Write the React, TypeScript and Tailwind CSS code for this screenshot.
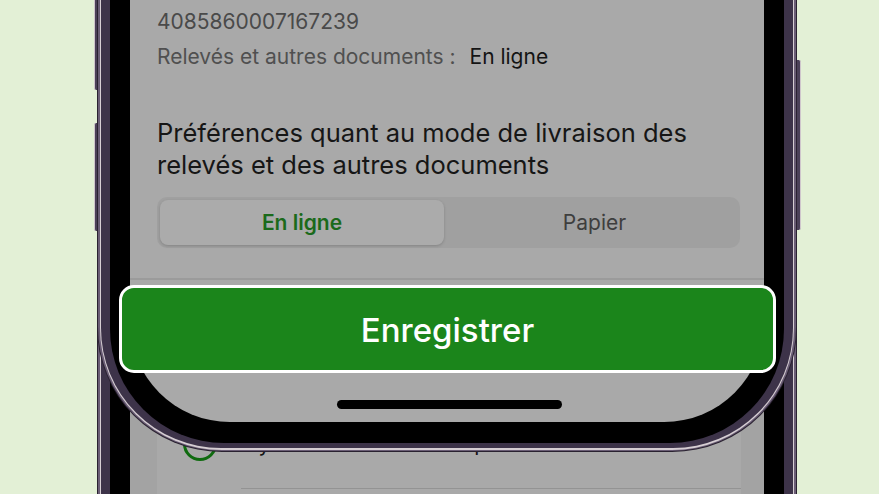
import React from "react";

function SideStrip({ side }: { side: "left" | "right" }) {
  const parts = [
    <div key="a" className="w-[1px] h-full bg-[#2a2231]" />,
    <div key="b" className="w-[2px] h-full bg-[#6a5d75]" />,
    <div key="c" className="w-[1px] h-full bg-[#d6ced3]" />,
    <div key="d" className="w-[9px] h-full bg-[#3d3349]" />,
  ];
  return <div className="flex h-full">{side === "left" ? parts : [...parts].reverse()}</div>;
}

export default function App() {
  return (
    <div
      className="relative w-[879px] h-[494px] overflow-hidden bg-[#e3f0d6]"
      style={{ fontFamily: 'Inter, "Noto Sans", "Liberation Sans", sans-serif' }}
    >
      {/* side buttons */}
      <div className="absolute left-[94px] top-[-20px] w-[4px] h-[110px] rounded-l-[2px] bg-[#4b4058] border-l border-[#cfc6cc]" />
      <div className="absolute left-[94px] top-[123px] w-[4px] h-[108px] rounded-l-[2px] bg-[#4b4058] border-l border-[#cfc6cc]" />
      <div className="absolute left-[797px] top-[60px] w-[4px] h-[170px] rounded-r-[2px] bg-[#4b4058] border-r border-[#cfc6cc]" />

      {/* lower phone layer (continuation) */}
      <div className="ml-[97px] w-[700px] h-[494px] flex">
        <SideStrip side="left" />
        <div className="w-[20px] h-full bg-black" />
        <div className="flex-1 h-full bg-[#a3a3a3] pt-[380px]">
          <div className="ml-[27px] mr-[23px] h-[200px] bg-[#a9a9a9] pt-[47px]">
            <div className="flex items-center h-[34px] pl-[26px]">
              <div className="w-[34px] h-[34px] rounded-full border-[3px] border-[#0f6b0f]" />
              <span className="ml-[28px] text-[21px] leading-[24px] text-[#161616]">
                Synchroniser mon compte
              </span>
            </div>
            <div className="mt-[27px] ml-[84px] h-[1px] bg-[#939393]" />
          </div>
        </div>
        <div className="w-[20px] h-full bg-black" />
        <SideStrip side="right" />
      </div>

      {/* upper phone layer with rounded bottom */}
      <div className="absolute left-[97px] top-0 w-[700px] h-[452px] rounded-b-[125px] bg-[#2a2231] px-[1px] pb-[1px]">
        <div className="h-full rounded-b-[124px] bg-[#6a5d75] px-[2px] pb-[1px]">
          <div className="h-full rounded-b-[122px] bg-[#d6ced3] px-[1px] pb-[2px]">
            <div className="h-full rounded-b-[120px] bg-[#3d3349] px-[9px] pb-[5px]">
              <div className="h-full rounded-b-[114px] bg-black px-[20px] pb-[21px]">
                <div className="relative h-full rounded-b-[100px] bg-[#a9a9a9] overflow-hidden flex flex-col">
                  <div className="pl-[27px] pr-[24px] pt-[9px]">
                    <div className="text-[21px] leading-[26px] text-[#4a4a4a]">4085860007167239</div>
                    <div className="mt-[9px] text-[21px] leading-[26px] text-[#505050] flex">
                      <span>Relevés et autres documents :</span>
                      <span className="ml-[14px] text-[#141414]">En ligne</span>
                    </div>
                    <div className="mt-[47px] text-[25.5px] leading-[32px] text-[#161616]">
                      Préférences quant au mode de livraison des
                      <br />
                      relevés et des autres documents
                    </div>
                    <div className="mt-[16px] h-[51px] rounded-[10px] bg-[#a0a0a0] p-[3px] flex">
                      <div className="w-[284px] h-full rounded-[8px] bg-[#ababab] shadow-[0_1px_3px_rgba(0,0,0,0.18)] flex items-center justify-center text-[21px] font-semibold text-[#1b6a1b]">
                        En ligne
                      </div>
                      <div className="flex-1 h-full pl-[8px] flex items-center justify-center text-[21px] text-[#3e3e3e]">
                        Papier
                      </div>
                    </div>
                  </div>
                  <div className="mt-[30px] h-[2px] bg-[#9b9b9b]" />
                  <div className="absolute left-[207px] bottom-[13px] w-[225px] h-[9px] rounded-full bg-black" />
                </div>
              </div>
            </div>
          </div>
        </div>
      </div>

      {/* highlighted button */}
      <div className="absolute left-[119px] top-[285px] w-[657px] h-[88px] rounded-[15px] border-[3px] border-white bg-[#1b851b] flex items-center justify-center pt-[3px]">
        <span className="text-[33px] font-medium text-white">Enregistrer</span>
      </div>
    </div>
  );
}
